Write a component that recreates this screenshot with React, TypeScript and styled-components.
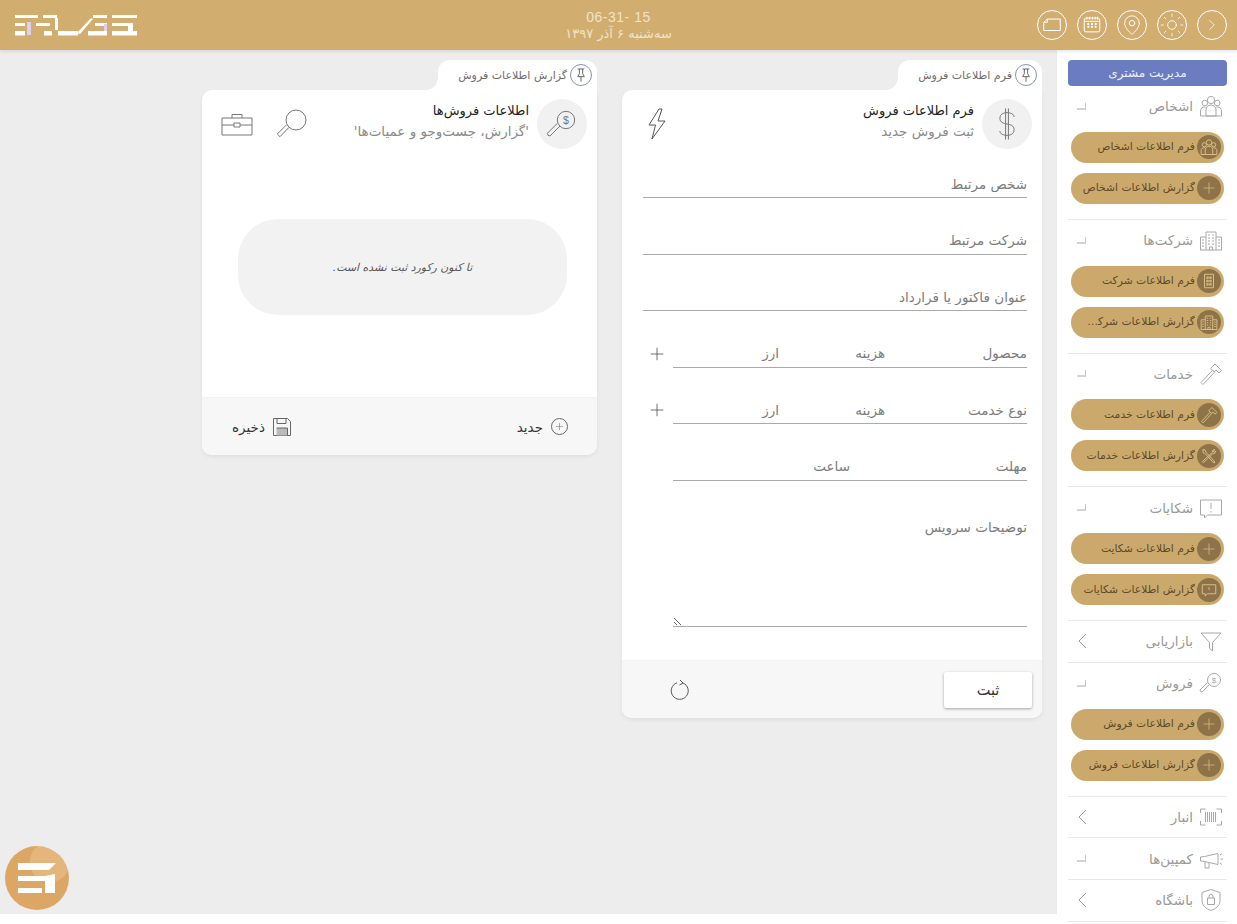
import React from 'react';
import styled, { createGlobalStyle } from 'styled-components';
import { MapPin, Plus, Sun, ChevronRight } from 'lucide-react';

const FONT = '"DejaVu Sans", "Noto Sans", sans-serif';

const GlobalStyle = createGlobalStyle`
  html, body {
    margin: 0;
    background: #fff;
    overflow: hidden;
  }
  * {
    box-sizing: border-box;
  }
  body {
    font-family: ${FONT};
    direction: rtl;
  }
`;

const Glyph = styled.svg.attrs<{ $size?: number }>((p) => ({
  width: p.$size ?? 24,
  height: p.$size ?? 24,
  viewBox: '0 0 24 24',
}))<{ $size?: number }>`
  fill: none;
  stroke: currentColor;
  stroke-width: 1;
  flex-shrink: 0;

  & > * {
    vector-effect: non-scaling-stroke;
  }
`;

type IconProps = { size?: number };

const UsersIcon = ({ size }: IconProps) => (
  <Glyph $size={size}>
    <circle cx="12" cy="6" r="3.6" />
    <circle cx="5.8" cy="9" r="2.8" />
    <circle cx="18.2" cy="9" r="2.8" />
    <path d="M1.5 22v-5c0-2.5 1.8-4 4.2-4h1M22.5 22v-5c0-2.5-1.8-4-4.2-4h-1" />
    <path d="M7 22v-6c0-3 2-5 5-5s5 2 5 5v6zM1.5 22h21" />
  </Glyph>
);

const BuildingIcon = ({ size }: IconProps) => (
  <Glyph $size={size}>
    <path d="M7 22V4h10v18M1.5 22V9H7M22.5 22V9H17M1 22h22" />
    <path d="M9 7h2M13 7h2M9 10h2M13 10h2M9 13h2M13 13h2M9 16h2M13 16h2M3 12h2M3 15h2M3 18h2M19 12h2M19 15h2M19 18h2M10.5 22v-3h3v3" />
  </Glyph>
);

const BlockIcon = ({ size }: IconProps) => (
  <Glyph $size={size}>
    <rect x="6" y="3" width="12" height="18" />
    <path d="M9 6.5h2v2H9zM13 6.5h2v2h-2zM9 11h2v2H9zM13 11h2v2h-2zM9 15.5h2v2H9zM13 15.5h2v2h-2z" />
  </Glyph>
);

const HammerIcon = ({ size }: IconProps) => (
  <Glyph $size={size}>
    <path d="M2 20.5l2 2 11.5-12.2-2-2zM11.5 6.5L16 2l6.5 6.5-2.5 2.5-3-3-1.5 1.8z" />
  </Glyph>
);

const ToolsIcon = ({ size }: IconProps) => (
  <Glyph $size={size}>
    <path d="M4 3l3 1 1 3 12 13-1.5 1.5L6.500 8.500 4 7.500zM20 3.500l-3 1-.5 2.500L3 19.500 4.500 21 17 9l2.500-.5 1.500-3-2 1.500-1.500-1.500z" />
  </Glyph>
);

const CommentIcon = ({ size }: IconProps) => (
  <Glyph $size={size}>
    <path d="M1.500 4h21v15h-14l-3 3v-3h-4z" />
    <path d="M12 7v6M12 15v1.500" />
  </Glyph>
);

const ScreenIcon = ({ size }: IconProps) => (
  <Glyph $size={size}>
    <path d="M3 5h18v12h-11l-3 3v-3H3z" />
    <path d="M12 8v4" />
  </Glyph>
);

const FunnelIcon = ({ size }: IconProps) => (
  <Glyph $size={size}>
    <path d="M2 4h20l-8.500 9.500V22l-3-2.500v-6z" />
  </Glyph>
);

const SearchMoneyIcon = ({ size }: IconProps) => (
  <Glyph $size={size}>
    <circle cx="15" cy="9" r="6.500" />
    <path d="M10.500 13.500L3 21l-1.500-.5L1 19l7.500-7.500" />
    <text x="15" y="12" fontSize="8" textAnchor="middle" fill="currentColor" stroke="none" fontFamily="Liberation Sans">$</text>
  </Glyph>
);

const BarcodeIcon = ({ size }: IconProps) => (
  <Glyph $size={size}>
    <path d="M1.500 8V4h5M22.500 8V4h-5M1.500 16v4h5M22.500 16v4h-5" />
    <path d="M6.500 7v10M8.500 7v10M10.500 7v10M12.500 7v10M14.500 7v10M16.500 7v10" />
  </Glyph>
);

const MegaphoneIcon = ({ size }: IconProps) => (
  <Glyph $size={size}>
    <path d="M1.500 10v4l4 .5 13.500 3V6.500L5.500 9.500zM6 15v6h4v-5" />
    <path d="M21 8l2-1.500M21.500 12H24M21 16l2 1.500" />
  </Glyph>
);

const ShieldIcon = ({ size }: IconProps) => (
  <Glyph $size={size}>
    <path d="M12 1.500l9 3v8c0 5-4 8.500-9 10-5-1.500-9-5-9-10v-8z" />
    <rect x="8.500" y="10" width="7" height="6.500" />
    <path d="M10 10V8.500a2 2 0 0 1 4 0V10" />
  </Glyph>
);

const MagnifierIcon = ({ size }: IconProps) => (
  <Glyph $size={size}>
    <circle cx="15" cy="9" r="7.500" />
    <path d="M9.800 14.500L3 21.500l-2-2 7-7" />
  </Glyph>
);

const DollarIcon = ({ size }: IconProps) => (
  <Glyph $size={size}>
    <path d="M17 7c0-2-2.500-3-5-3S7 5 7 8s2.500 3.500 5 4 5 1 5 4-2.500 4-5 4-5-1-5-3" />
    <path d="M11 1v22M13 1v22" />
  </Glyph>
);

const PinIcon = ({ size }: IconProps) => (
  <Glyph $size={size}>
    <path d="M7 3h10M9.500 3v7L7 14.500h10L14.500 10V3M12 14.500V22" />
  </Glyph>
);

const BriefcaseIcon = () => (
  <svg width="32" height="24" viewBox="0 0 32 24" fill="none" stroke="#777" strokeWidth="1">
    <path d="M1 6h30v17H1zM1 13h12M19 13h12M13 11h6v4h-6zM11 6V2.500h10V6" />
  </svg>
);

const BoltIcon = () => (
  <svg width="20" height="32" viewBox="0 0 20 32" fill="none" stroke="#555" strokeWidth="1">
    <path d="M12 1L2 17h6.500L5 31l13-18h-7l4-12z" />
  </svg>
);

const RefreshIcon = () => (
  <svg width="20" height="22" viewBox="0 0 20 22" fill="none" stroke="#555" strokeWidth="1">
    <path d="M7 3.800a8.500 8.500 0 1 0 6 .2" />
    <path d="M10 1l3 3-3.500 2" />
  </svg>
);

const SaveIcon = () => (
  <svg width="18" height="18" viewBox="0 0 18 18" fill="none" stroke="#666" strokeWidth="1">
    <path d="M.5.500h14l3 3v14H.500z" />
    <path d="M4 .500v5h9v-5" />
    <rect x="3.500" y="10" width="11" height="7.500" fill="#bbb" stroke="none" />
    <path d="M3.500 10h11v7.500" />
  </svg>
);

const CalendarIcon = ({ size }: IconProps) => (
  <Glyph $size={size}>
    <rect x="3.500" y="4.500" width="17" height="15" rx="2" />
    <path d="M6.500 3v3M9.500 3v3M12.500 3v3M15.500 3v3M18 3v3M3.500 8h17" />
    <path d="M7 11h2M11 11h2M15 11h2M7 14h2M11 14h2M15 14h2" strokeWidth="2" />
  </Glyph>
);

const SheetIcon = ({ size }: IconProps) => (
  <Glyph $size={size}>
    <path d="M3 9l4-3.500h14V18H3zM7 5.500V9H3" />
  </Glyph>
);

const TopBar = styled.header`
  display: grid;
  grid-template-columns: 1fr auto 1fr;
  align-items: center;
  height: 50px;
  padding: 0 10px;
  background: #d2ad70;
  box-shadow: 0 1px 4px rgba(0, 0, 0, 0.12);
  position: relative;
  z-index: 2;
`;

const TopActions = styled.div`
  display: flex;
  gap: 10px;
`;

const RoundButton = styled.button`
  display: flex;
  align-items: center;
  justify-content: center;
  width: 30px;
  height: 30px;
  padding: 0;
  background: none;
  color: #fff;
  border: 1px solid #fff;
  border-radius: 50%;
`;

const Clock = styled.div`
  text-align: center;
  color: #f0e3c8;
`;

const ClockTime = styled.div`
  direction: ltr;
  font-family: "Liberation Sans", sans-serif;
  font-size: 14px;
  letter-spacing: 0.5px;
  line-height: 16px;
  margin-top: 1px;
`;

const ClockDate = styled.div`
  font-size: 13px;
  line-height: 18px;
`;

const BrandWrap = styled.div`
  display: flex;
  justify-content: flex-end;
  padding-left: 5px;
`;

const Layout = styled.div`
  display: flex;
  height: 874px;
`;

const Sidebar = styled.aside`
  width: 180px;
  height: 874px;
  flex-shrink: 0;
  padding: 10px 10px 0 11px;
  background: #fff;
  overflow: hidden;
`;

const ManageButton = styled.button`
  display: block;
  width: 159px;
  height: 26px;
  border: none;
  border-radius: 4px;
  background: #6b7dc0;
  color: #eef0fa;
  font-family: ${FONT};
  font-size: 12px;
`;

const Section = styled.section`
  border-bottom: 1px solid #e9e9e9;
`;

const SectionHead = styled.div`
  display: flex;
  align-items: center;
  height: 40.75px;
  padding-right: 4px;
  color: #a8a8a8;
`;

const SectionLabel = styled.span`
  flex: 1;
  margin-right: 6px;
  font-size: 13.500px;
  color: #999;
`;

const CollapseMark = styled.span`
  width: 9px;
  height: 7px;
  margin-left: 9px;
  border-right: 1px solid #c4c4c4;
  border-bottom: 2px solid #d4d4d4;
`;

const ExpandMark = styled.svg.attrs({ width: 9, height: 16, viewBox: '0 0 9 16' })`
  margin-left: 10px;
  fill: none;
  stroke: #999;
`;

const PillList = styled.div`
  display: flex;
  flex-direction: column;
  gap: 10px;
  padding: 5px 3px 15px 3px;
`;

const Pill = styled.a`
  display: flex;
  align-items: center;
  gap: 2px;
  width: 153px;
  height: 31px;
  padding: 0 3px 0 9px;
  border-radius: 16px;
  background: #cba96d;
  color: #5d4a28;
  font-size: 10.75px;
`;

const PillBadge = styled.span`
  display: flex;
  align-items: center;
  justify-content: center;
  flex-shrink: 0;
  width: 24px;
  height: 24px;
  border-radius: 50%;
  background: #8d7347;
  color: #d9bd88;
`;

const PillText = styled.span`
  line-height: 22px;
  white-space: nowrap;
  overflow: hidden;
  text-overflow: ellipsis;
`;

const Workspace = styled.main`
  flex: 1;
  display: flex;
  align-items: flex-start;
  gap: 25px;
  height: 864px;
  padding: 10px 15px 0 0;
  background: #ededed;
`;

const Panel = styled.div<{ $width: number }>`
  display: flex;
  flex-direction: column;
  width: ${(p) => p.$width}px;
`;

const PanelTab = styled.div`
  display: flex;
  align-items: center;
  align-self: flex-start;
  gap: 3px;
  height: 30px;
  padding: 0 5px 0 20px;
  border-radius: 12px 12px 0 0;
  background: #fff;
  color: #6c6c6c;
  font-size: 11px;
  position: relative;

  &::after {
    content: '';
    position: absolute;
    left: -12px;
    bottom: 0;
    width: 12px;
    height: 12px;
    background: radial-gradient(circle at 0 0, transparent 11.500px, #fff 12px);
  }
`;

const PinBadge = styled.span`
  display: flex;
  align-items: center;
  justify-content: center;
  width: 22px;
  height: 22px;
  border: 1px solid #8792b5;
  border-radius: 50%;
  color: #666;
`;

const Card = styled.div`
  border-radius: 0 0 10px 10px;
  border-top-left-radius: 10px;
  background: #fff;
  box-shadow: 0 2px 4px rgba(0, 0, 0, 0.06);
  overflow: hidden;
`;

const CardHead = styled.div`
  display: flex;
  align-items: center;
  padding: 9px 10px 0 15px;
`;

const HeadBadge = styled.span`
  display: flex;
  align-items: center;
  justify-content: center;
  width: 50px;
  height: 50px;
  border-radius: 50%;
  background: #f1f1f1;
  color: #777;
`;

const HeadText = styled.div`
  flex: 1;
  align-self: flex-start;
  margin-right: 8px;
  padding-top: 1px;
`;

const HeadTitle = styled.div`
  font-size: 13px;
  line-height: 21px;
  font-weight: 500;
  color: #222;
`;

const HeadSub = styled.div`
  font-size: 13.500px;
  line-height: 21px;
  color: #8a8a8a;
`;

const HeadActions = styled.div`
  display: flex;
  gap: 15px;
`;

const HeadAction = styled.button`
  display: flex;
  align-items: center;
  justify-content: center;
  width: 40px;
  height: 40px;
  padding: 0;
  border: none;
  background: none;
  color: #777;
`;

const FormBody = styled.div`
  display: flex;
  flex-direction: column;
  gap: 28.500px;
  padding: 21px 15px 33px 21px;
`;

const TextField = styled.input`
  width: 100%;
  height: 28px;
  padding: 0;
  border: none;
  border-bottom: 1px solid #aaa;
  outline: none;
  background: none;
  font-family: ${FONT};
  font-size: 13.500px;
  direction: rtl;

  &::placeholder {
    color: #7c7c7c;
    opacity: 1;
  }
`;

const FieldRow = styled.div`
  display: flex;
  align-items: center;
`;

const FieldGroup = styled.div<{ $columns: string }>`
  display: grid;
  grid-template-columns: ${(p) => p.$columns};
  width: 354px;
  border-bottom: 1px solid #aaa;
`;

const GroupField = styled(TextField)`
  height: 27px;
  border-bottom: none;
`;

const AddButton = styled.button`
  display: flex;
  align-items: center;
  justify-content: flex-start;
  flex: 1;
  padding: 0 0 0 4px;
  border: none;
  background: none;
  color: #555;
  direction: ltr;
`;

const Indented = styled.div`
  padding-left: 30px;
`;

const AreaField = styled.textarea`
  display: block;
  width: 354px;
  height: 118px;
  padding: 8px 0 0;
  border: none;
  border-bottom: 1px solid #aaa;
  outline: none;
  font-family: ${FONT};
  font-size: 13.500px;
  line-height: 20px;

  &::placeholder {
    color: #7c7c7c;
    opacity: 1;
  }
`;

const CardFoot = styled.div`
  display: flex;
  align-items: center;
  justify-content: space-between;
  height: 58px;
  background: #f7f7f7;
  border-top: 1px solid #f2f2f2;
`;

const SubmitButton = styled.button`
  width: 88px;
  height: 36px;
  margin-right: 10px;
  border: none;
  border-radius: 2px;
  background: #fff;
  color: #333;
  font-family: ${FONT};
  font-size: 14.500px;
  box-shadow: 0 1px 3px rgba(0, 0, 0, 0.35);
`;

const FootIconButton = styled.button`
  display: flex;
  margin-left: 48px;
  padding: 0;
  border: none;
  background: none;
`;

const FootAction = styled.button<{ $side: 'start' | 'end' }>`
  display: flex;
  align-items: center;
  gap: 8px;
  padding: 0;
  ${(p) => (p.$side === 'start' ? 'margin-right: 29px;' : 'margin-left: 30px;')}
  border: none;
  background: none;
  color: #333;
  font-family: ${FONT};
  font-size: 13.500px;
`;

const PlusCircle = styled.span`
  display: flex;
  align-items: center;
  justify-content: center;
  width: 17px;
  height: 17px;
  border: 1px solid #666;
  border-radius: 50%;
  color: #555;
`;

const ReportBody = styled.div`
  padding: 70px 30px 82px 36px;
`;

const EmptyNote = styled.div`
  display: flex;
  align-items: center;
  justify-content: center;
  height: 96px;
  border-radius: 40px;
  background: #f2f2f2;
  color: #555;
  font-size: 10.900px;
  font-style: italic;
`;

const FloatingLogo = styled.div`
  position: fixed;
  left: 5px;
  top: 846px;
  width: 64px;
  height: 64px;
  border-radius: 50%;
  background: radial-gradient(circle at 70% 25%, #e4b67c 0, #e4b67c 30%, #dca664 31%, #dca664 100%);
  display: flex;
  align-items: center;
  justify-content: center;
  z-index: 3;
`;

const BRAND_BARS: [number, number, number, number][] = [
  [0, 0, 23, 3], [0, 8, 10, 3], [0, 16, 10, 4.500],
  [21, 8, 14, 3], [28, 0, 14, 3], [40, 3, 3, 12], [29, 16, 8, 4.500], [43, 16, 20, 4.500],
  [78, 0, 14, 3], [80, 8, 12, 3], [73, 16, 19, 4.500],
  [97, 0, 25, 3], [97, 8, 21, 3], [97, 16, 25, 4.500], [113, 11, 5, 5],
];

const Brand = () => (
  <svg width="122" height="21" viewBox="0 0 122 21" fill="#fff">
    {BRAND_BARS.map(([x, y, w, h]) => (
      <rect key={`${x}-${y}`} x={x} y={y} width={w} height={h} />
    ))}
    <path d="M62 18L76 3l2 1-13 15z" />
    <rect x="12" y="7" width="4" height="13" fill="#dcd0ee" />
    <rect x="89" y="9" width="3" height="7" fill="#dcd0ee" />
  </svg>
);

const FloatMark = () => (
  <svg width="38" height="30" viewBox="0 0 38 30" fill="#fff">
    <path d="M0 0h38l-7 7H0zM0 13h27l10-2v19H27V18H0zM0 25h24v5H0z" />
  </svg>
);

type PillItem = { label: string; icon: React.ReactNode };

const plusIcon = <Plus size={18} strokeWidth={1} />;

const sections: { label: string; icon: React.ReactNode; pills?: PillItem[] }[] = [
  {
    label: 'اشخاص',
    icon: <UsersIcon />,
    pills: [
      { label: 'فرم اطلاعات اشخاص', icon: <UsersIcon size={18} /> },
      { label: 'گزارش اطلاعات اشخاص', icon: plusIcon },
    ],
  },
  {
    label: 'شرکت‌ها',
    icon: <BuildingIcon />,
    pills: [
      { label: 'فرم اطلاعات شرکت', icon: <BlockIcon size={18} /> },
      { label: 'گزارش اطلاعات شرکت‌ها', icon: <BuildingIcon size={18} /> },
    ],
  },
  {
    label: 'خدمات',
    icon: <HammerIcon />,
    pills: [
      { label: 'فرم اطلاعات خدمت', icon: <HammerIcon size={18} /> },
      { label: 'گزارش اطلاعات خدمات', icon: <ToolsIcon size={18} /> },
    ],
  },
  {
    label: 'شکایات',
    icon: <CommentIcon />,
    pills: [
      { label: 'فرم اطلاعات شکایت', icon: plusIcon },
      { label: 'گزارش اطلاعات شکایات', icon: <ScreenIcon size={18} /> },
    ],
  },
  { label: 'بازاریابی', icon: <FunnelIcon /> },
  {
    label: 'فروش',
    icon: <SearchMoneyIcon />,
    pills: [
      { label: 'فرم اطلاعات فروش', icon: plusIcon },
      { label: 'گزارش اطلاعات فروش', icon: plusIcon },
    ],
  },
  { label: 'انبار', icon: <BarcodeIcon /> },
  { label: 'کمپین‌ها', icon: <MegaphoneIcon />, pills: [] },
  { label: 'باشگاه', icon: <ShieldIcon /> },
];

const App = () => (
  <>
    <GlobalStyle />
    <TopBar>
      <TopActions>
        <RoundButton><ChevronRight size={18} strokeWidth={1} /></RoundButton>
        <RoundButton><Sun size={26} strokeWidth={0.8} /></RoundButton>
        <RoundButton><MapPin size={22} strokeWidth={1} /></RoundButton>
        <RoundButton><CalendarIcon size={22} /></RoundButton>
        <RoundButton><SheetIcon size={22} /></RoundButton>
      </TopActions>
      <Clock>
        <ClockTime>06-31- 15</ClockTime>
        <ClockDate>سه‌شنبه ۶ آذر ۱۳۹۷</ClockDate>
      </Clock>
      <BrandWrap>
        <Brand />
      </BrandWrap>
    </TopBar>
    <Layout>
      <Sidebar>
        <ManageButton>مدیریت مشتری</ManageButton>
        {sections.map((section) => (
          <Section key={section.label}>
            <SectionHead>
              {section.icon}
              <SectionLabel>{section.label}</SectionLabel>
              {section.pills ? (
                <CollapseMark />
              ) : (
                <ExpandMark><path d="M8 1L1 8l7 7" /></ExpandMark>
              )}
            </SectionHead>
            {section.pills && section.pills.length > 0 && (
              <PillList>
                {section.pills.map((pill) => (
                  <Pill key={pill.label}>
                    <PillBadge>{pill.icon}</PillBadge>
                    <PillText>{pill.label}</PillText>
                  </Pill>
                ))}
              </PillList>
            )}
          </Section>
        ))}
      </Sidebar>
      <Workspace>
        <Panel $width={420}>
          <PanelTab>
            <PinBadge><PinIcon size={16} /></PinBadge>
            فرم اطلاعات فروش
          </PanelTab>
          <Card>
            <CardHead>
              <HeadBadge><DollarIcon size={34} /></HeadBadge>
              <HeadText>
                <HeadTitle>فرم اطلاعات فروش</HeadTitle>
                <HeadSub>ثبت فروش جدید</HeadSub>
              </HeadText>
              <HeadActions>
                <HeadAction><BoltIcon /></HeadAction>
              </HeadActions>
            </CardHead>
            <FormBody>
              <TextField placeholder="شخص مرتبط" />
              <TextField placeholder="شرکت مرتبط" />
              <TextField placeholder="عنوان فاکتور یا قرارداد" />
              <FieldRow>
                <FieldGroup $columns="142px 106px 106px">
                  <GroupField placeholder="محصول" />
                  <GroupField placeholder="هزینه" />
                  <GroupField placeholder="ارز" />
                </FieldGroup>
                <AddButton><Plus size={20} strokeWidth={1} /></AddButton>
              </FieldRow>
              <FieldRow>
                <FieldGroup $columns="142px 106px 106px">
                  <GroupField placeholder="نوع خدمت" />
                  <GroupField placeholder="هزینه" />
                  <GroupField placeholder="ارز" />
                </FieldGroup>
                <AddButton><Plus size={20} strokeWidth={1} /></AddButton>
              </FieldRow>
              <FieldRow>
                <FieldGroup $columns="177px 177px">
                  <GroupField placeholder="مهلت" />
                  <GroupField placeholder="ساعت" />
                </FieldGroup>
              </FieldRow>
              <Indented>
                <AreaField placeholder="توضیحات سرویس" />
              </Indented>
            </FormBody>
            <CardFoot>
              <SubmitButton>ثبت</SubmitButton>
              <FootIconButton><RefreshIcon /></FootIconButton>
            </CardFoot>
          </Card>
        </Panel>
        <Panel $width={395}>
          <PanelTab>
            <PinBadge><PinIcon size={16} /></PinBadge>
            گزارش اطلاعات فروش
          </PanelTab>
          <Card>
            <CardHead>
              <HeadBadge><SearchMoneyIcon size={32} /></HeadBadge>
              <HeadText>
                <HeadTitle>اطلاعات فروش‌ها</HeadTitle>
                <HeadSub>'گزارش، جست‌وجو و عمیات‌ها'</HeadSub>
              </HeadText>
              <HeadActions>
                <HeadAction><MagnifierIcon size={32} /></HeadAction>
                <HeadAction><BriefcaseIcon /></HeadAction>
              </HeadActions>
            </CardHead>
            <ReportBody>
              <EmptyNote>تا کنون رکورد ثبت نشده است.</EmptyNote>
            </ReportBody>
            <CardFoot>
              <FootAction $side="start">
                <PlusCircle><Plus size={11} strokeWidth={1} /></PlusCircle>
                جدید
              </FootAction>
              <FootAction $side="end">
                <SaveIcon />
                ذخیره
              </FootAction>
            </CardFoot>
          </Card>
        </Panel>
      </Workspace>
    </Layout>
    <FloatingLogo>
      <FloatMark />
    </FloatingLogo>
  </>
);

export default App;
